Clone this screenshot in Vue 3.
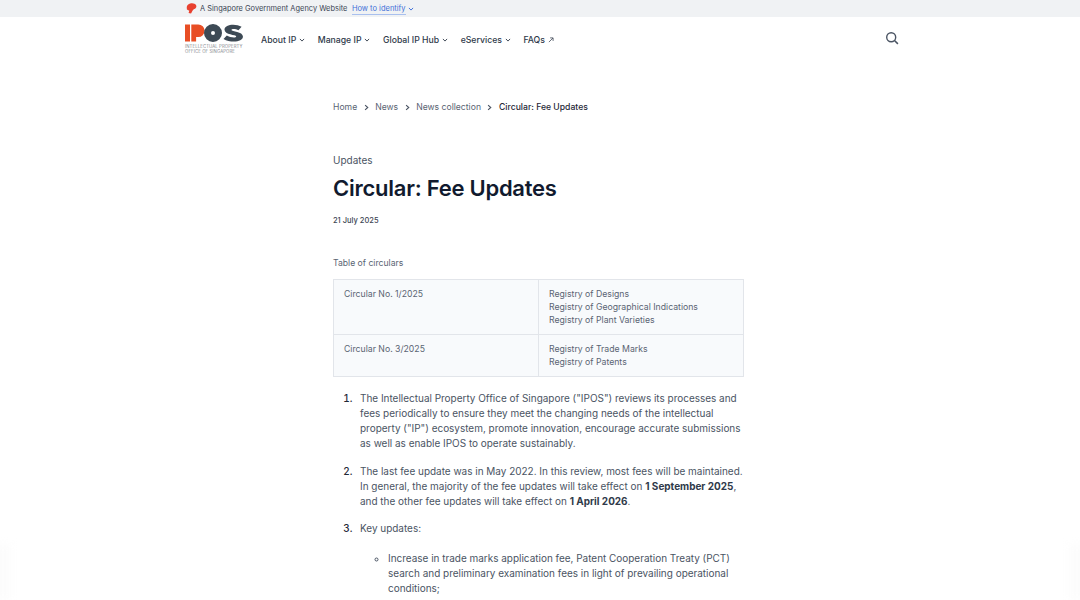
<script setup>
const nav = [
  { label: 'About IP', icon: 'down' },
  { label: 'Manage IP', icon: 'down' },
  { label: 'Global IP Hub', icon: 'down' },
  { label: 'eServices', icon: 'down' },
  { label: 'FAQs', icon: 'out' },
]
const crumbs = ['Home', 'News', 'News collection']
const rows = [
  { name: 'Circular No. 1/2025', regs: ['Registry of Designs', 'Registry of Geographical Indications', 'Registry of Plant Varieties'] },
  { name: 'Circular No. 3/2025', regs: ['Registry of Trade Marks', 'Registry of Patents'] },
]
</script>

<template>
  <div class="page">
    <div class="masthead">
      <div class="wrap mast-inner">
        <svg class="lion" viewBox="0 0 12 12" width="11" height="11"><path d="M4.600.6C7-.2 10 .6 11 2.400c.9 1.800-.2 3.600-2 4.200-.9.300-1.500 1-1.900 1.800L5.500 11.500 2.800 11 3.600 8.400 1 7.200.8 4.400C1 2.600 2.800 1.200 4.600.6Z" fill="#e8412f"/></svg>
        <span class="mast-text">A Singapore Government Agency Website</span>
        <span class="identify">How to identify</span>
        <svg class="chev blue" viewBox="0 0 10 10" width="6" height="6"><path d="M1.500 3.200 5 6.800l3.500-3.600" fill="none" stroke="currentColor" stroke-width="1.600"/></svg>
      </div>
    </div>
    <header class="wrap header">
      <div class="logo">
        <svg viewBox="0 0 59 18" width="59" height="18" class="logo-mark">
          <rect x="0" y="0.500" width="5" height="17" fill="#e84e25"/>
          <path d="M6.300.5h7a6.300 6.300 0 0 1 6.300 6.300 6.300 6.300 0 0 1-6.300 6.300h-2.200v4.400H6.300Z" fill="#e84e25"/>
          <path fill-rule="evenodd" d="M28 0a9 9 0 1 1 0 18 9 9 0 0 1 0-18Zm0 7a2 2 0 1 0 0 4 2 2 0 0 0 0-4Z" fill="#3d4a55"/>
          <path transform="translate(-21.500 0) scale(1.370 1)" d="M57 2.700 54.700 6.200C53 5 49.800 4.400 49.600 5.900c-.1 1.700 8.400 1.300 8.400 6.700 0 5.700-9 6.500-14.200 2.400l2.400-3.500c2 1.900 6.700 2.800 6.900 1 .1-1.900-8.600-1.400-8.600-7C44.500.2 52.800-.7 57 2.700Z" fill="#3d4a55"/>
        </svg>
        <div class="logo-text">INTELLECTUAL PROPERTY<br>OFFICE OF SINGAPORE</div>
      </div>
      <nav class="nav">
        <a v-for="n in nav" :key="n.label" class="nav-item">
          {{ n.label }}
          <svg v-if="n.icon === 'down'" viewBox="0 0 10 10" width="6" height="6"><path d="M1.500 3.200 5 6.800l3.500-3.600" fill="none" stroke="#3d4654" stroke-width="1.600"/></svg>
          <svg v-else viewBox="0 0 10 10" width="6" height="6"><path d="M1.500 8.500 8.200 1.800M3.500 1.500h5v5" fill="none" stroke="#3d4654" stroke-width="1.300"/></svg>
        </a>
      </nav>
      <svg class="search" viewBox="0 0 14 14" width="14" height="14"><circle cx="6.200" cy="6.200" r="4.500" fill="none" stroke="#4a5463" stroke-width="1.400"/><path d="m9.500 9.500 3.400 3.400" stroke="#4a5463" stroke-width="1.500" fill="none"/></svg>
    </header>
    <main class="content">
      <div class="crumbs">
        <template v-for="c in crumbs" :key="c">
          <span>{{ c }}</span>
          <svg viewBox="0 0 10 10" width="7" height="7"><path d="M3 1.500 6.800 5 3 8.500" fill="none" stroke="#4a5463" stroke-width="1.600"/></svg>
        </template>
        <span class="current">Circular: Fee Updates</span>
      </div>
      <div class="eyebrow">Updates</div>
      <h1>Circular: Fee Updates</h1>
      <div class="date">21 July 2025</div>
      <div class="caption">Table of circulars</div>
      <table>
        <tr v-for="r in rows" :key="r.name">
          <td>{{ r.name }}</td>
          <td><div v-for="g in r.regs" :key="g">{{ g }}</div></td>
        </tr>
      </table>
      <ol>
        <li>The Intellectual Property Office of Singapore ("IPOS") reviews its processes and fees periodically to ensure they meet the changing needs of the intellectual property ("IP") ecosystem, promote innovation, encourage accurate submissions as well as enable IPOS to operate sustainably.</li>
        <li>The last fee update was in May 2022. In this review, most fees will be maintained. In general, the majority of the fee updates will take effect on <b>1 September 2025</b>, and the other fee updates will take effect on <b>1 April 2026</b>.</li>
        <li>Key updates:
          <ul>
            <li>Increase in trade marks application fee, Patent Cooperation Treaty (PCT) search and preliminary examination fees in light of prevailing operational conditions;</li>
          </ul>
        </li>
      </ol>
    </main>
    <div class="edge edge-left"></div>
    <div class="edge edge-right"></div>
  </div>
</template>

<style>
html, body { margin: 0; overflow: hidden; background: #fff; }
</style>
<style scoped>
.page { position: relative; height: 600px; overflow: hidden; font-family: Inter, "Liberation Sans", sans-serif; color: #4a5463; background: #fff; }
.wrap { width: 720px; margin: 0 auto; box-sizing: border-box; }
.masthead { background: #f0f2f4; height: 17px; }
.mast-inner { display: flex; align-items: center; height: 17px; padding-left: 6px; }
.mast-text { font-size: 7.450px; margin-left: 3px; color: #3d4654; }
.identify { font-size: 7.500px; color: #3f6fd8; margin-left: 4.500px; border-bottom: 1px solid #a9c0ee; line-height: 10px; margin-top: 1px; }
.chev { margin-left: 2px; }
.blue { color: #3f6fd8; }
.header { display: flex; align-items: center; height: 44px; padding-left: 5px; }
.logo { width: 76px; flex: none; margin-top: -1px; }
.logo-mark { display: block; }
.logo-text { font-size: 4.300px; line-height: 5px; color: #84888e; letter-spacing: .1px; margin-top: 2px; white-space: nowrap; }
.nav { display: flex; gap: 12.500px; margin-top: 1px; }
.nav-item { font-size: 8.700px; font-weight: 500; color: #2f3a4a; display: flex; align-items: center; gap: 3px; white-space: nowrap; }
.search { margin-left: auto; margin-right: 1px; margin-top: -2px; }
.content { width: 411px; margin-left: 333px; }
.crumbs { display: flex; align-items: center; gap: 5.500px; font-size: 8.650px; color: #5a6473; margin-top: 40px; line-height: 13px; }
.current { color: #1f2937; font-weight: 500; }
.eyebrow { font-size: 10px; line-height: 15px; margin-top: 39px; color: #4a5463; }
h1 { font-size: 22px; line-height: 28px; font-weight: 600; color: #111a2e; margin: 6px 0 0; letter-spacing: -.25px; }
.date { font-size: 7.500px; line-height: 11px; color: #3d4654; margin-top: 13px; font-weight: 500; }
.caption { font-size: 8.650px; line-height: 13px; color: #5a6473; margin-top: 31px; }
table { border-collapse: collapse; width: 411px; margin-top: 9px; font-size: 8.700px; line-height: 13px; color: #5a6473; table-layout: fixed; background: #f8fafc; }
td { border: 1px solid #e2e5ea; vertical-align: top; padding: 8px 10px 7px; }
ol { margin: 14px 0 0; padding: 0 0 0 27px; font-size: 9.960px; line-height: 15px; }
ol > li { margin-bottom: 12.500px; }
ol > li::marker { content: counter(list-item) ". \2002"; color: #1f2937; font-weight: 500; }
ul { list-style: circle; margin: 15px 0 0; padding-left: 28px; }
b { font-weight: 700; color: #2f3a4a; }
.edge { position: absolute; bottom: 0; width: 14px; height: 55px; background: #fcfcfc; filter: blur(5px); }
.edge-left { left: -4px; }
.edge-right { right: -4px; }
</style>
